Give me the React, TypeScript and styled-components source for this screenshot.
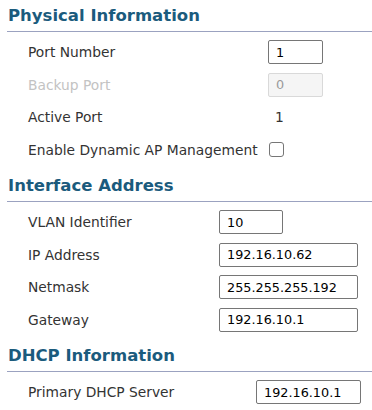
import { createGlobalStyle } from "styled-components";
import styled from "styled-components";

const GlobalStyle = createGlobalStyle`
    body {
        margin: 0;
        background: #ffffff;
        font-family: "DejaVu Sans", Verdana, sans-serif;
    }
`

const Page = styled.div`
    width: 372px;
    display: flex;
    flex-direction: column;
`

const Section = styled.section`
    display: flex;
    flex-direction: column;
`

const SectionTitle = styled.h2`
    margin: 0 0 0 7px;
    padding: 6px 0 6px 1px;
    height: 19px;
    line-height: 19px;
    font-size: 16.5px;
    font-weight: 700;
    color: #1b5b7d;
    border-bottom: 1px solid #9ba2c0;
`

const Rows = styled.div<{ $labelWidth: number }>`
    display: grid;
    grid-template-columns: ${p => p.$labelWidth}px auto;
    grid-auto-rows: 32.5px;
    align-items: center;
    padding: 4px 0 4px 28px;
`

const Label = styled.label<{ $disabled?: boolean }>`
    font-size: 13.8px;
    color: ${p => p.$disabled ? '#c3c3c3' : '#333333'};
    white-space: nowrap;
`

const TextField = styled.input<{ $width: number }>`
    box-sizing: border-box;
    width: ${p => p.$width}px;
    height: 24px;
    padding: 0 7px;
    font-family: "DejaVu Sans", Verdana, sans-serif;
    font-size: 12.8px;
    color: #000000;
    border: 1px solid #767676;
    border-radius: 2px;
    background: #ffffff;
    outline: none;

    &:disabled {
        background: #f5f5f5;
        border-color: #d9d9d9;
        color: #9a9a9a;
    }
`

const Value = styled.span`
    font-size: 13.8px;
    color: #333333;
    padding-left: 7px;
`

const Checkbox = styled.input`
    appearance: none;
    box-sizing: border-box;
    display: block;
    margin: 0 0 0 1px;
    width: 15px;
    height: 15px;
    border: 1px solid #767676;
    border-radius: 3px;
    background: #ffffff;
`

export default function App() {
    return (
        <Page>
            <GlobalStyle />
            <Section>
                <SectionTitle>Physical Information</SectionTitle>
                <Rows $labelWidth={240}>
                    <Label>Port Number</Label>
                    <TextField $width={55} defaultValue="1" />
                    <Label $disabled>Backup Port</Label>
                    <TextField $width={55} defaultValue="0" disabled />
                    <Label>Active Port</Label>
                    <Value>1</Value>
                    <Label>Enable Dynamic AP Management</Label>
                    <div><Checkbox type="checkbox" /></div>
                </Rows>
            </Section>
            <Section>
                <SectionTitle>Interface Address</SectionTitle>
                <Rows $labelWidth={191}>
                    <Label>VLAN Identifier</Label>
                    <TextField $width={64} defaultValue="10" />
                    <Label>IP Address</Label>
                    <TextField $width={139} defaultValue="192.16.10.62" />
                    <Label>Netmask</Label>
                    <TextField $width={139} defaultValue="255.255.255.192" />
                    <Label>Gateway</Label>
                    <TextField $width={139} defaultValue="192.16.10.1" />
                </Rows>
            </Section>
            <Section>
                <SectionTitle>DHCP Information</SectionTitle>
                <Rows $labelWidth={228}>
                    <Label>Primary DHCP Server</Label>
                    <TextField $width={105} defaultValue="192.16.10.1" />
                </Rows>
            </Section>
        </Page>
    );
}
